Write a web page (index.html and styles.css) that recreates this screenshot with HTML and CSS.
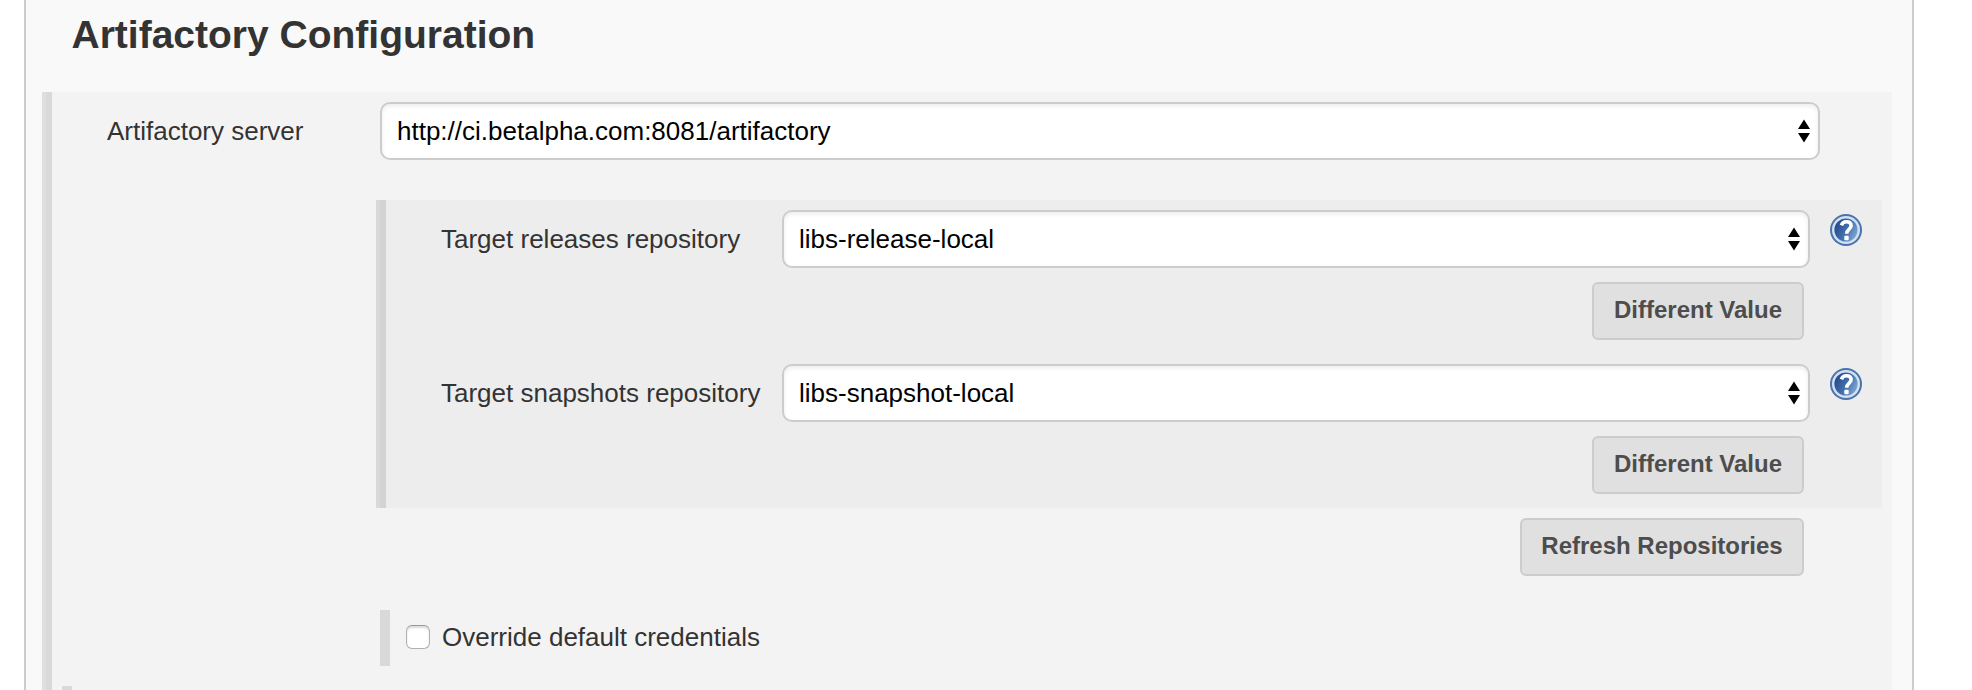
FILE: index.html
```html
<!DOCTYPE html>
<html lang="en">
<head>
<meta charset="utf-8">
<title>Artifactory Configuration</title>
<link rel="stylesheet" href="styles.css">
</head>
<body>
<svg class="defs" aria-hidden="true">
  <defs>
    <linearGradient id="ball" x1="0" y1="0.3" x2="1" y2="0.8">
      <stop offset="0" stop-color="#1d4587"/>
      <stop offset="0.5" stop-color="#4470ad"/>
      <stop offset="1" stop-color="#8db2dc"/>
    </linearGradient>
    <symbol id="help" viewBox="0 0 32 32">
      <circle cx="16" cy="16" r="16" fill="#4a72ad"/>
      <circle cx="16" cy="16" r="12.8" fill="url(#ball)" stroke="#d3e0f1" stroke-width="2.4"/>
      <path d="M11.4 11.4C12.3 8.6 14 7.8 16.3 7.8c2.9 0 4.8 1.5 4.8 4 0 3.3-4.5 3.8-4.5 7.9" fill="none" stroke="#fff" stroke-width="3.6"/>
      <rect x="14.3" y="21.8" width="4.4" height="4.4" rx="1" fill="#fff"/>
    </symbol>
    <symbol id="arrows" viewBox="0 0 12 24">
      <path d="M6 .5 12 10H0zM0 14h12L6 23.5z"/>
    </symbol>
  </defs>
</svg>
<main class="page">
  <h1 class="title">Artifactory Configuration</h1>
  <section class="panel">
    <div class="row">
      <span class="label server-label">Artifactory server</span>
      <div class="select"><span>http://ci.betalpha.com:8081/artifactory</span><svg class="arrows"><use href="#arrows"/></svg></div>
    </div>
    <div class="content">
      <div class="repos">
        <div class="row">
          <span class="label">Target releases repository</span>
          <div class="select"><span>libs-release-local</span><svg class="arrows"><use href="#arrows"/></svg></div>
          <svg class="help"><use href="#help"/></svg>
        </div>
        <div class="actions"><button class="button">Different Value</button></div>
        <div class="row second">
          <span class="label">Target snapshots repository</span>
          <div class="select"><span>libs-snapshot-local</span><svg class="arrows"><use href="#arrows"/></svg></div>
          <svg class="help"><use href="#help"/></svg>
        </div>
        <div class="actions"><button class="button">Different Value</button></div>
      </div>
      <div class="refresh"><button class="button">Refresh Repositories</button></div>
      <label class="override"><input class="checkbox" type="checkbox"><span>Override default credentials</span></label>
    </div>
    <div class="next-section"></div>
  </section>
</main>
</body>
</html>
```
FILE: styles.css
```css
* {
  box-sizing: border-box;
}

body {
  margin: 0;
  height: 690px;
  overflow: hidden;
  background: #fff;
  color: #333;
  font: 26px/32px "Liberation Sans", Helvetica, Arial, sans-serif;
}

.defs {
  position: absolute;
  width: 0;
  height: 0;
}

.page {
  width: 1890px;
  height: 690px;
  margin-left: 24px;
  padding: 10px 20px 0 16px;
  border: solid #ccc;
  border-width: 0 2px;
  background: #f9f9f9;
}

.title {
  margin: 0 0 32px 29.5px;
  font-size: 39px;
  line-height: 50px;
}

.panel {
  height: 598px;
  padding: 10px 0 0 10px;
  background: linear-gradient(90deg, #dfdfdf 4px, #d9d9d9 4px 10px, #f3f3f3 10px);
}

.row {
  display: flex;
}

.label {
  flex: none;
  line-height: 58px;
}

.server-label {
  width: 328px;
  padding-left: 55px;
}

.select {
  display: flex;
  align-items: center;
  justify-content: space-between;
  width: 1440px;
  height: 58px;
  padding: 0 8px 0 15px;
  border: 2px solid #ccc;
  border-radius: 10px;
  background: #fff;
  box-shadow: inset 0 2px 4px rgba(0, 0, 0, 0.08);
  color: #000;
}

.arrows {
  width: 12px;
  height: 24px;
}

.content {
  padding: 40px 10px 0 324px;
}

.repos {
  height: 308px;
  padding: 10px 0 0 10px;
  background: linear-gradient(90deg, #d9d9d9 4px, #d3d3d3 4px 10px, #ededed 10px);
}

.repos .label {
  width: 396px;
  padding-left: 55px;
}

.repos .select {
  width: 1028px;
}

.help {
  width: 32px;
  height: 32px;
  margin: 4px 0 0 20px;
}

.actions,
.refresh {
  display: flex;
  justify-content: flex-end;
  padding: 14px 78px 0 0;
}

.refresh {
  padding-top: 10px;
}

.second {
  margin-top: 24px;
}

.button {
  height: 58px;
  padding: 0 18px 2px;
  border: 2px solid #ccc;
  border-radius: 6px;
  background: #e0e0e0;
  color: #4d4d4d;
  font: bold 24px/52px "Liberation Sans", Helvetica, Arial, sans-serif;
  white-space: nowrap;
}

.actions .button {
  width: 212px;
}

.refresh .button {
  width: 284px;
}

.override {
  display: flex;
  align-items: center;
  width: 400px;
  height: 56px;
  margin: 34px 0 0 4px;
  padding: 0 0 2px 16px;
  border-left: 10px solid #d9d9d9;
}

.checkbox {
  appearance: none;
  width: 24px;
  height: 24px;
  margin: 0 12px 0 0;
  border: 1px solid #b0b0b0;
  border-top-color: #999;
  border-radius: 6px;
  background: #fff;
  box-shadow: inset 0 2px 2px rgba(0, 0, 0, 0.14);
}

.override span {
  white-space: nowrap;
}

.next-section {
  width: 10px;
  height: 4px;
  margin: 20px 0 0 10px;
  background: #d9d9d9;
}
```
